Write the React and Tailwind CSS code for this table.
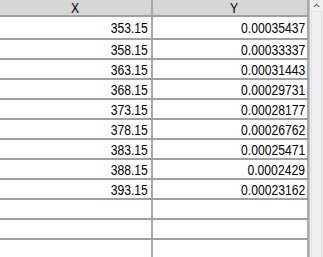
import React from 'react';

const rows = [
  ['353.15', '0.00035437'],
  ['358.15', '0.00033337'],
  ['363.15', '0.00031443'],
  ['368.15', '0.00029731'],
  ['373.15', '0.00028177'],
  ['378.15', '0.00026762'],
  ['383.15', '0.00025471'],
  ['388.15', '0.0002429'],
  ['393.15', '0.00023162'],
  ['', ''],
  ['', ''],
  ['', ''],
];

const UpArrow = () => (
  <svg width="7" height="5" viewBox="0 0 7 5" className="block">
    <path d="M0 4 L3.5 0.5 L7 4 L5.5 4 L3.5 2 L1.5 4 Z" fill="#606060" />
  </svg>
);

// narrow grid font: Arial widths squeezed to match the condensed look
const Cell = ({ children }) => (
  <span className="inline-block scale-x-[0.81] origin-right whitespace-nowrap">{children}</span>
);

export default function App() {
  return (
    <div className="w-[323px] h-[257px] overflow-hidden bg-white flex font-['Liberation_Sans',Arial,sans-serif] text-[15px] text-black">
      {/* grid */}
      <div className="w-[309px] flex flex-col">
        <div className="h-[17px] shrink-0 flex bg-[#d6d6d6] border-b-2 border-[#a0a0a0]">
          <div className="w-[153px] border-r-2 border-[#a8a8a8] flex items-center justify-center leading-none">
            <span className="inline-block scale-x-[0.81]">X</span>
          </div>
          <div className="w-[156px] border-r-2 border-[#a8a8a8] flex items-center justify-center pl-[8px] leading-none">
            <span className="inline-block scale-x-[0.81]">Y</span>
          </div>
        </div>
        {rows.map((r, i) => (
          <div key={i} className={`${i === 0 ? 'h-[23px]' : 'h-[20px]'} shrink-0 flex border-b-2 border-[#a0a0a0]`}>
            <div className="w-[153px] border-r-2 border-[#a8a8a8] flex items-center justify-end pr-[3px] leading-none">
              <Cell>{r[0]}</Cell>
            </div>
            <div className="w-[156px] border-r-2 border-[#a8a8a8] flex items-center justify-end pr-[2px] leading-none">
              <Cell>{r[1]}</Cell>
            </div>
          </div>
        ))}
      </div>
      {/* scrollbar */}
      <div className="w-[14px] flex flex-col bg-[#f0f0f0] border-l border-[#b8c4d2]">
        <div className="h-[11px] shrink-0 flex items-center justify-center">
          <UpArrow />
        </div>
        <div className="flex-1 border border-[#dde2e8] border-b-0 mx-[1px]" />
      </div>
    </div>
  );
}
